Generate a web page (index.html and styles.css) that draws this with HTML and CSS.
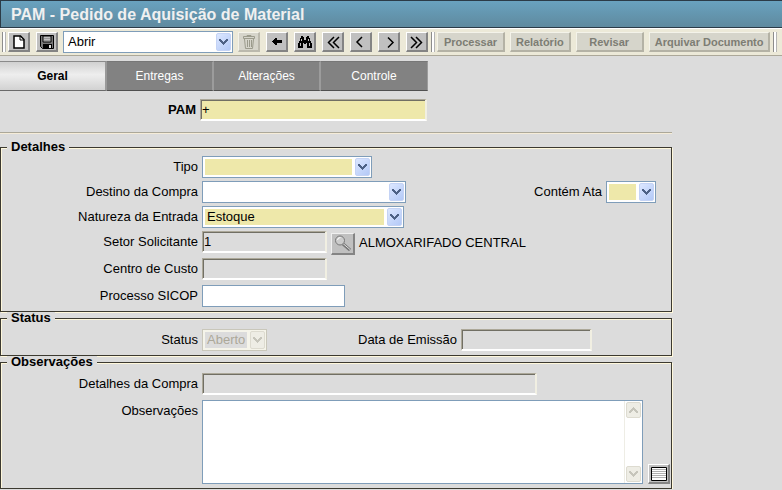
FILE: index.html
```html
<!DOCTYPE html>
<html lang="pt-BR">
<head>
<meta charset="utf-8">
<title>PAM - Pedido de Aquisição de Material</title>
<link rel="stylesheet" href="styles.css">
</head>
<body>
<svg class="defs" aria-hidden="true">
  <symbol id="chevron" viewBox="0 0 9 6"><path d="M0 0h2v1h1v1h1v1h1v-1h1v-1h1v-1h2v2h-1v1h-1v1h-1v1h-1v1h-1v-1h-1v-1h-1v-1h-1v-1h-1z"/></symbol>
</svg>
<header class="titlebar"><h1>PAM - Pedido de Aquisição de Material</h1></header>

<div class="toolbar">
  <span class="grip"></span>
  <button class="tool" type="button" aria-label="Novo"><svg width="16" height="16" viewBox="0 0 16 16"><path d="M3 2h6.500l3.500 3.500v8.500H3z" fill="#fff" stroke="#000" stroke-width="1.500"/><path d="M9 2v4h4" fill="none" stroke="#000"/></svg></button>
  <button class="tool" type="button" aria-label="Salvar"><svg width="16" height="16" viewBox="0 0 16 16"><path d="M1.500 1.500h13v13h-11l-2-2z" fill="#777" stroke="#000"/><path d="M4 2h8v6H4z" fill="#c0c0c0" stroke="#000"/><path d="M5 4.500h6M5 6.500h6" stroke="#999"/><path d="M4 10h9v4H4z"/><path d="M10 11h2v3h-2z" fill="#ddd"/></svg></button>
  <span class="combo combo-action"><select aria-label="Ação"><option>Abrir</option></select><span class="arrow"><svg width="9" height="6"><use href="#chevron"/></svg></span></span>
  <button class="tool off" type="button" aria-label="Excluir" disabled><svg width="16" height="16" viewBox="0 0 16 16" fill="none" stroke="#9b9b8c"><path d="M6 2.500V1.500h4v1M2.500 2.500h11v2h-11zM3.500 5l1 9.500h7l1-9.500M6.500 6v7M8.500 6v7M10.500 6v7"/></svg></button>
  <button class="tool" type="button" aria-label="Voltar"><svg width="16" height="16" viewBox="0 0 16 16"><path d="M3 7h1V6h1V5h1V4h2v2h5v3H8v2H6v-1H5V9H4V8H3z"/></svg></button>
  <button class="tool" type="button" aria-label="Localizar"><svg width="16" height="16" viewBox="0 0 16 16"><path d="M4 2h2v1h1v3h2V3h1V2h2v2h1v3h1v2h1v5h-5V9H9v1H7V9H6v5H1V9h1V7h1V4h1z"/><path d="M4.500 5v2M11.500 5v2M3.500 9v3M12.500 9v3" stroke="#c0c0c0"/></svg></button>
  <button class="tool" type="button" aria-label="Primeiro"><svg class="nav" width="16" height="16" viewBox="0 0 16 16"><path d="M9 3L3.500 8.500L9 14M14 3L8.500 8.500L14 14"/></svg></button>
  <button class="tool" type="button" aria-label="Anterior"><svg class="nav" width="16" height="16" viewBox="0 0 16 16"><path d="M9 3L4 8L9 13"/></svg></button>
  <button class="tool" type="button" aria-label="Próximo"><svg class="nav" width="16" height="16" viewBox="0 0 16 16"><path d="M7 3.500L12 8.500L7 13.500"/></svg></button>
  <button class="tool" type="button" aria-label="Último"><svg class="nav" width="16" height="16" viewBox="0 0 16 16"><path d="M2 3L7.500 8.500L2 14M7 3L12.500 8.500L7 14"/></svg></button>
  <span class="grip"></span>
  <div class="commands">
    <button class="command wide" type="button" disabled>Processar</button>
    <button class="command" type="button" disabled>Relatório</button>
    <button class="command wide" type="button" disabled>Revisar</button>
    <button class="command" type="button" disabled>Arquivar Documento</button>
  </div>
  <span class="grip"></span>
</div>

<nav class="tabs">
  <a class="tab active" href="#geral">Geral</a>
  <a class="tab" href="#entregas">Entregas</a>
  <a class="tab" href="#alteracoes">Alterações</a>
  <a class="tab" href="#controle">Controle</a>
</nav>

<form class="form" id="geral">
  <div class="row key">
    <label for="pam">PAM</label>
    <input class="sunken required" id="pam" type="text" value="+">
  </div>

  <fieldset>
    <legend>Detalhes</legend>
    <div class="row">
      <label for="tipo">Tipo</label>
      <span class="combo combo-tipo required"><select id="tipo"><option></option></select><span class="arrow"><svg width="9" height="6"><use href="#chevron"/></svg></span></span>
    </div>
    <div class="row">
      <label for="destino">Destino da Compra</label>
      <span class="combo combo-destino"><select id="destino"><option></option></select><span class="arrow"><svg width="9" height="6"><use href="#chevron"/></svg></span></span>
      <div class="pair end">
        <label for="ata">Contém Ata</label>
        <span class="combo combo-ata required"><select id="ata"><option></option></select><span class="arrow"><svg width="9" height="6"><use href="#chevron"/></svg></span></span>
      </div>
    </div>
    <div class="row">
      <label for="natureza">Natureza da Entrada</label>
      <span class="combo combo-natureza required"><select id="natureza"><option>Estoque</option></select><span class="arrow"><svg width="9" height="6"><use href="#chevron"/></svg></span></span>
    </div>
    <div class="row tall">
      <label for="setor">Setor Solicitante</label>
      <input class="sunken short" id="setor" type="text" value="1" readonly>
      <button class="lookup" type="button" aria-label="Pesquisar setor"><svg width="20" height="20" viewBox="0 0 20 20" fill="none"><path d="M10 10l7 6" stroke="#777" stroke-width="3"/><path d="M10 9.500l7 6" stroke="#ddd"/><circle cx="7" cy="6.500" r="4.500" fill="#ccc" stroke="#777"/><path d="M4.500 6a3 3 0 0 1 3-2.500" stroke="#fff"/></svg></button>
      <output for="setor">ALMOXARIFADO CENTRAL</output>
    </div>
    <div class="row tall">
      <label for="centro">Centro de Custo</label>
      <input class="sunken short" id="centro" type="text" readonly>
    </div>
    <div class="row">
      <label for="sicop">Processo SICOP</label>
      <input class="flat" id="sicop" type="text">
    </div>
  </fieldset>

  <fieldset>
    <legend>Status</legend>
    <div class="row">
      <label for="status">Status</label>
      <span class="combo combo-status off"><select id="status" disabled><option>Aberto</option></select><span class="arrow"><svg width="9" height="6"><use href="#chevron"/></svg></span></span>
      <div class="pair date">
        <label for="data">Data de Emissão</label>
        <input class="sunken emission" id="data" type="text" readonly>
      </div>
    </div>
  </fieldset>

  <fieldset>
    <legend>Observações</legend>
    <div class="row">
      <label for="detalhes">Detalhes da Compra</label>
      <input class="sunken long" id="detalhes" type="text" readonly>
    </div>
    <div class="row notes">
      <label for="obs">Observações</label>
      <div class="memo">
        <textarea id="obs"></textarea>
        <div class="scroll" aria-hidden="true">
          <span class="arrow up"><svg width="9" height="6"><use href="#chevron"/></svg></span>
          <span class="arrow"><svg width="9" height="6"><use href="#chevron"/></svg></span>
        </div>
      </div>
      <button class="tool" type="button" aria-label="Editar texto"><svg width="18" height="16" viewBox="0 0 18 16"><path d="M1.500 1.500h15v13h-15z" fill="#fff" stroke="#000"/><path d="M2 3.500h14M2 5.500h14M2 7.500h14M2 9.500h14M2 11.500h14" stroke="#b0b0b0"/></svg></button>
    </div>
  </fieldset>
</form>
</body>
</html>
```
FILE: styles.css
```css
* { box-sizing: border-box; }

body {
  margin: 0;
  background: #dcdcdc;
  color: #000;
  font: 13px/16px "Liberation Sans", Arial, sans-serif;
}

button, input, select, textarea { font: inherit; color: inherit; margin: 0; border-radius: 0; }
svg { display: block; }
.defs { position: absolute; width: 0; height: 0; }

.titlebar {
  height: 28px;
  padding: 0 10px;
  border: 1px solid #2b3b47;
  border-right: 0;
  background: linear-gradient(#69a2bf, #5f8a9f);
}
.titlebar h1 { margin: 0; font-size: 16px; line-height: 27px; color: #f0f0f0; }

.toolbar {
  display: flex;
  align-items: center;
  gap: 6px;
  height: 28px;
  padding: 0 2px;
  background: #ece9d8;
  border-top: 1px solid #fff;
  border-bottom: 1px solid #aca899;
}
.grip {
  flex: none;
  width: 4px;
  height: 20px;
  margin-left: -3px;
  margin-right: -4px;
  border-left: 1px solid #8d8d8d;
  border-right: 1px solid #b4b4b4;
  background: #fff;
}
.grip:first-child { margin-left: 0; }
.tool {
  flex: none;
  display: grid;
  place-items: center;
  width: 22px;
  height: 20px;
  padding: 0;
  background: #c0c0c0;
  border: solid;
  border-width: 1px 2px 2px 1px;
  border-color: #fff #848484 #848484 #fff;
}
.tool.off { background: #d6d5cb; border-color: #f4f3ea #bbb9ad #bbb9ad #f4f3ea; }
.nav { fill: none; stroke: #000; stroke-width: 1.5; }
.commands { display: flex; gap: 5px; }
.command {
  flex: none;
  height: 20px;
  padding: 0 5px;
  font-size: 11px;
  line-height: 16px;
  font-weight: bold;
  white-space: nowrap;
  color: #7d7d74;
  background: #d6d5cb;
  border: solid;
  border-width: 1px 2px 2px 1px;
  border-color: #f4f3ea #b4b2a5 #b4b2a5 #f4f3ea;
}
.command.wide { width: 68px; }

.combo { position: relative; flex: none; height: 22px; }
.combo select {
  display: block;
  appearance: none;
  width: 100%;
  height: 22px;
  padding: 2px 19px 2px 2px;
  text-indent: 2px;
  border: 1px solid #7f9db9;
  background: #fff;
  opacity: 1;
}
.combo.required select { background: linear-gradient(#eee8aa, #eee8aa) content-box, #fff; }
.combo.off select { color: #aca899; border-color: #c9c7ba; background: linear-gradient(#dcdcdc, #dcdcdc) content-box, #f5f4ea; }
.combo > .arrow { position: absolute; top: 2px; right: 2px; }
.arrow {
  display: grid;
  place-items: center;
  width: 15px;
  height: 18px;
  pointer-events: none;
  background: linear-gradient(135deg, #dce7ff, #b3c9f7);
  border: 1px solid #c4d3f5;
  border-radius: 2px;
  fill: #4d6185;
}
.combo.off .arrow, .scroll .arrow { background: #eeede5; border-color: #dddbd0; fill: #c6c5bb; }
.combo-action { width: 170px; margin: 0 -1px; }
.combo-tipo { width: 170px; }
.combo-destino { width: 204px; }
.combo-natureza { width: 202px; }
.combo-ata { width: 50px; }
.combo-status { width: 65px; }

.tabs { display: grid; grid-template-columns: repeat(4, 1fr); max-width: 428px; margin-top: 5px; }
.tab {
  height: 30px;
  line-height: 28px;
  font-size: 12px;
  text-align: center;
  text-decoration: none;
  color: #fff;
  background: #828282;
  border: solid;
  border-width: 1px 2px 1px 0;
  border-color: #777 #9c9c9c #505050 #777;
}
.tab:last-child { border-right-width: 1px; }
.tab.active {
  color: #000;
  font-weight: bold;
  background: linear-gradient(#d0d0d0, #eee 45%, #d2d2d2);
  border-color: #8a8a8a #999 #6a6a6a #fff;
}

.form { max-width: 672px; }
.row { display: flex; align-items: flex-start; gap: 4px; }
.row + .row { margin-top: 3px; }
.row.tall { min-height: 24px; }
.row label { line-height: 22px; white-space: nowrap; }
.row > label { flex: none; width: 197px; text-align: right; }
.key { padding: 8px 0 11px; border-bottom: 1px solid #aca899; box-shadow: 0 1px #f5ecd8; margin-bottom: 8px; }
.key > label { width: 196px; font-weight: bold; }

input { height: 22px; }
.sunken {
  padding: 0 1px 1px;
  background: #dcdcdc;
  border: solid;
  border-width: 1px 2px 2px 1px;
  border-color: #aca899 #f1efe2 #fff #aca899;
  box-shadow: inset 1px 1px #716f64;
}
.sunken.required { width: 227px; background: #eee8aa; }
.short { width: 125px; }
.emission { width: 131px; }
.long { width: 335px; }
.flat { width: 143px; background: #fff; border: 1px solid #7f9db9; }

.lookup {
  align-self: flex-end;
  display: grid;
  place-items: center;
  width: 24px;
  height: 22px;
  padding: 0;
  background: #c0c0c0;
  border: solid;
  border-width: 1px 2px 2px 1px;
  border-color: #f0f0f0 #848484 #848484 #f0f0f0;
}
output { line-height: 24px; }

fieldset {
  min-width: 0;
  margin: 0;
  padding: 5px 0 4px;
  border: 1px solid #3c3a30;
  box-shadow: inset 1px 1px #fff8dc, 1px 1px #fff8dc;
}
fieldset:first-of-type { padding-top: 3px; }
legend {
  margin-left: 6px;
  padding: 0 4px;
  font-weight: bold;
  line-height: 12px;
  background: #dcdcdc;
}
.pair { display: flex; gap: 4px; }
.end { margin-left: auto; margin-right: 15px; }
.date { margin-left: 87px; }

.row.notes { margin-top: 5px; }
.memo { position: relative; flex: 1; }
.memo textarea {
  display: block;
  width: 100%;
  height: 84px;
  padding: 2px 18px 2px 2px;
  resize: none;
  overflow: hidden;
  background: #fff;
  border: 1px solid #7f9db9;
}
.scroll {
  position: absolute;
  top: 1px;
  right: 1px;
  bottom: 1px;
  display: flex;
  flex-direction: column;
  justify-content: space-between;
  padding: 1px;
  border-left: 1px solid #eeede5;
}
.scroll .arrow { height: 16px; }
.scroll .up svg { transform: rotate(180deg); }
.notes .tool { align-self: flex-end; margin: 0 1px; }
```
